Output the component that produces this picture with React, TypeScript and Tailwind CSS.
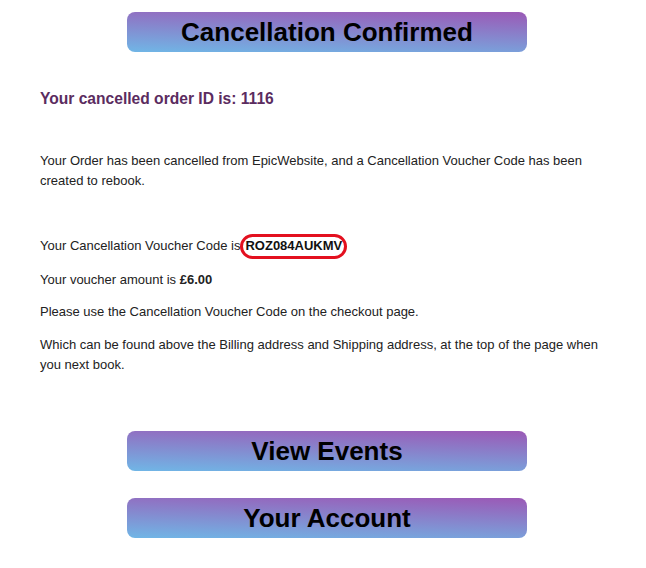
export default function App() {
  const banner =
    "flex h-10 w-[400px] items-center justify-center rounded-lg bg-[linear-gradient(182deg,#9b59b6,#70b6e6)] text-[26px] font-bold text-black";

  return (
    <div className="min-h-[568px] bg-white font-['Liberation_Sans',Arial,sans-serif] text-[13px] text-[#222]">
      <div className="flex justify-center pl-2 pt-3">
        <div className={banner}>Cancellation Confirmed</div>
      </div>

      <div className="px-10">
        <h2 className="mt-[37px] text-[15.6px] font-bold leading-[19px] text-[#5b2c5f]">
          Your cancelled order ID is: 1116
        </h2>

        <p className="mt-[43px] leading-5">
          Your Order has been cancelled from EpicWebsite, and a Cancellation Voucher Code has been created to rebook.
        </p>

        <p className="mt-[45px] flex h-5 items-center leading-5">
          Your Cancellation Voucher Code is
          <span className="inline-flex h-[25px] items-center rounded-[13px] border-[3px] border-[#e3101f] px-[2px] font-bold text-[#111]">
            ROZ084AUKMV
          </span>
        </p>

        <p className="mt-[14px] leading-5">
          Your voucher amount is <span className="font-bold">£6.00</span>
        </p>

        <p className="mt-3 leading-5">Please use the Cancellation Voucher Code on the checkout page.</p>

        <p className="mt-[13px] leading-5">
          Which can be found above the Billing address and Shipping address, at the top of the page when you next book.
        </p>
      </div>

      <div className="mt-[56px] flex flex-col items-center gap-[27px] pl-2">
        <button className={banner}>View Events</button>
        <button className={banner}>Your Account</button>
      </div>
    </div>
  );
}
